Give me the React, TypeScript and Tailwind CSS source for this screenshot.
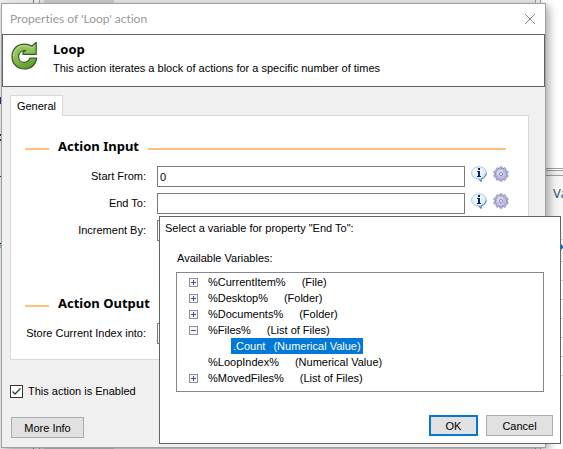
import { useId, useState, type ReactNode } from "react";

function LoopIcon() {
  return (
    <svg viewBox="0 0 28 30" className="h-[30px] w-7 shrink-0" aria-hidden="true">
      <defs>
        <linearGradient id="leaf" x1="0" y1="0" x2="0.3" y2="1">
          <stop offset="0" stopColor="#9cc065" />
          <stop offset="0.5" stopColor="#8fc456" />
          <stop offset="1" stopColor="#64a035" />
        </linearGradient>
      </defs>
      <path
        d="M21.800 5.200 L26.200 1.300 V13.400 H13 V10.900 L15.500 9.600 C11.500 8.900 8.600 11.700 8.600 15.400 C8.600 19 11 21.300 14 21.300 C17 21.300 19 20 19.800 17.200 H26.600 C26 23.600 20.900 28 14.300 28 C7 28 2 22.700 2 15.500 C2 8 7.500 3.200 14 3.200 C17.200 3.200 19.500 3.800 21.800 5.200 Z"
        fill="url(#leaf)"
        stroke="#365a22"
        strokeWidth="1.200"
        strokeLinejoin="round"
      />
      <path d="M3.600 15 C3.600 9 8 4.800 14 4.800 C17 4.800 19.500 5.500 22 7 L25 4.200" fill="none" stroke="#c3dda0" strokeWidth="1" />
    </svg>
  );
}

function InfoIcon() {
  return (
    <svg viewBox="0 0 16 16" className="size-4" aria-hidden="true">
      <defs>
        <radialGradient id="bubble" cx="0.400" cy="0.300" r="0.800">
          <stop offset="0" stopColor="#ffffff" />
          <stop offset="0.600" stopColor="#d9edfb" />
          <stop offset="1" stopColor="#7fa9d6" />
        </radialGradient>
      </defs>
      <path
        d="M8 0.800 C12.200 0.800 15.400 3.400 15.400 6.900 C15.400 9.800 13.200 12.100 10.300 12.800 L10.200 15.600 L7.400 13 C3.500 12.800 0.600 10.300 0.600 6.900 C0.600 3.400 3.800 0.800 8 0.800 Z"
        fill="url(#bubble)"
        stroke="#a9c4e2"
        strokeWidth="0.900"
      />
      <path d="M15.200 7.500 C15 10 13 12.200 10.300 12.800 L10.200 15.300 L7.600 13" fill="none" stroke="#4f76ad" strokeWidth="1" />
      <path d="M7 2 H9 V4 H7 Z M6 5 H9 V10 H10 V11 H6 V10 H7 V6 H6 Z" fill="#101f7c" />
    </svg>
  );
}

const TEETH = [0, 36, 72, 108, 144, 180, 216, 252, 288, 324];

function GearIcon() {
  return (
    <svg viewBox="0 0 16 16" className="size-4" aria-hidden="true">
      <g fill="#b9b8df" stroke="#8584ae" strokeWidth="0.700">
        {TEETH.map((angle) => (
          <rect key={angle} x="6.700" y="0.700" width="2.600" height="3.500" rx="0.700" transform={`rotate(${angle} 8 8)`} />
        ))}
        <circle cx="8" cy="8" r="5.200" />
      </g>
      <circle cx="8" cy="8" r="5" fill="#c2c1e5" />
      <circle cx="7" cy="6.500" r="3" fill="#d3d2ef" />
      <circle cx="8" cy="8" r="1.500" fill="#ffffff" stroke="#7d7ca8" strokeWidth="0.900" />
    </svg>
  );
}

function SectionTitle({ children }: { children: ReactNode }) {
  return (
    <div className="mr-[3px] flex h-5 items-start">
      <span className="mt-3 h-0.5 w-6 bg-[#ffbf80]" />
      <h2 className="mx-[9px] font-['Noto_Sans','DejaVu_Sans',sans-serif] text-[13px] leading-5 font-bold">{children}</h2>
      <span className="mt-3 h-0.5 flex-1 bg-[#ffbf80]" />
    </div>
  );
}

function Field({ label, initial = "", helpers = false }: { label: string; initial?: string; helpers?: boolean }) {
  const id = useId();
  const [value, setValue] = useState(initial);
  return (
    <div className="flex h-[21px] items-center">
      <label htmlFor={id} className="w-[121px] shrink-0 text-right whitespace-nowrap">
        {label}
      </label>
      <input
        id={id}
        value={value}
        onChange={(e) => setValue(e.target.value)}
        className="ml-[11px] h-[21px] min-w-0 flex-1 border border-[#7a7a7a] bg-white px-0.5 outline-none"
      />
      <div className="flex h-full w-11 items-start justify-end gap-1.5">
        {helpers && (
          <>
            <button type="button" aria-label={`About ${label}`}>
              <InfoIcon />
            </button>
            <button type="button" aria-label={`Choose variable for ${label}`}>
              <GearIcon />
            </button>
          </>
        )}
      </div>
    </div>
  );
}

function Expander({ open }: { open: boolean }) {
  return (
    <svg viewBox="0 0 9 9" className="size-[9px]" aria-hidden="true">
      <rect x="0.500" y="0.500" width="8" height="8" fill="#f4f4f4" stroke="#919191" />
      <path d={open ? "M2 4.500 H7" : "M2 4.500 H7 M4.500 2 V7"} stroke="#3553a5" />
    </svg>
  );
}

const VARIABLES = [
  { name: "%CurrentItem%", type: "(File)", state: "closed" },
  { name: "%Desktop%", type: "(Folder)", state: "closed" },
  { name: "%Documents%", type: "(Folder)", state: "closed" },
  { name: "%Files%", type: "(List of Files)", state: "open", child: { name: ".Count", type: "(Numerical Value)" } },
  { name: "%LoopIndex%", type: "(Numerical Value)", state: "leaf" },
  { name: "%MovedFiles%", type: "(List of Files)", state: "closed" },
];

function VariablePicker() {
  return (
    <section
      role="dialog"
      aria-label="Select a variable"
      className="absolute top-[216px] right-0.5 left-[159px] border border-[#646464] bg-white pb-[7px]"
    >
      <p className="mt-[3px] ml-[5px] leading-4">Select a variable for property "End To":</p>
      <p className="mt-[14px] ml-[17px] leading-4">Available Variables:</p>
      <ul role="tree" className="mt-1.5 mr-4 ml-4 h-[120px] border border-[#828790] pt-px pl-3">
        {VARIABLES.map((v) => (
          <li key={v.name} role="treeitem">
            <div className="flex h-4 items-center leading-4">
              <button type="button" aria-label={`Toggle ${v.name}`} className="w-[19px]">
                {v.state !== "leaf" && <Expander open={v.state === "open"} />}
              </button>
              <span>{v.name}</span>
              <span className="ml-4">{v.type}</span>
            </div>
            {v.child && (
              <div className="ml-[42px] flex h-4 w-fit gap-2 bg-[#0078d7] px-0.5 leading-4 text-white">
                <span>{v.child.name}</span>
                <span>{v.child.type}</span>
              </div>
            )}
          </li>
        ))}
      </ul>
      <div className="mt-[23px] mr-[7px] flex justify-end gap-2">
        <button type="button" className="h-[21px] w-[49px] border-2 border-[#0078d7] bg-[#e1e1e1] leading-4">
          OK
        </button>
        <button type="button" className="h-[21px] w-[67px] border border-[#adadad] bg-[#e1e1e1] leading-4">
          Cancel
        </button>
      </div>
    </section>
  );
}

function BackgroundWindow() {
  return (
    <div className="absolute inset-0 flex bg-[#e8e8e8]">
      <div className="w-[34px] border-r border-[#777777] bg-[#f0f0f0]">
        <svg viewBox="0 0 2 449" className="h-[449px] w-0.5" aria-hidden="true">
          <path d="M0 97 h1 v7 h-1 Z" fill="#23359c" />
          <path d="M0 134 h1 v2 h-1 Z M0 139 h1 v2 h-1 Z" fill="#5a1f3c" />
          <path d="M0 176 h2 v1 h-2 Z M0 243 h2 v1 h-2 Z" fill="#333333" />
          <path d="M0 244 h1 v4 h-1 Z" fill="#7cc4dc" />
        </svg>
      </div>
      <div className="w-1.5 border-r border-[#a0a0a0] bg-[#f4f4f4]" />
      <div className="ml-1 w-[70px] bg-[#cbcbcb]" />
      <div className="flex-1" />
      <div className="w-7 border-l border-[#a0a0a0] bg-[#f0f0f0] pl-1">
        <div className="h-full border-l border-[#a0a0a0] bg-white">
          <div className="h-[168px]" />
          <div className="h-[3px] border-y border-[#a0a0a0]" />
          <div className="h-[5px] border-b border-[#a0a0a0] bg-[#f0f0f0]" />
          <div className="h-16 border-b border-[#cccccc] bg-[#f5f5f5] pt-[7px] pl-3 font-['Noto_Sans','DejaVu_Sans',sans-serif] text-[13px] leading-5 text-[#33557f]">
            Va
          </div>
          <div className="flex h-[22px] items-start justify-end border-b border-[#cccccc] bg-[#f5f5f5] pt-0.5">
            <svg viewBox="0 0 4 10" className="h-2.5 w-1" aria-hidden="true">
              <path d="M0 0 L4 4 V6 L0 10 Z" fill="#0070b8" />
            </svg>
          </div>
          <div className="h-[19px] border-b border-[#cccccc]" />
          <div className="h-[19px] border-b border-[#cccccc]" />
          <div className="h-[19px] border-b border-[#cccccc]" />
          <div className="h-[19px] border-b border-[#cccccc]" />
          <div className="h-[19px] border-b border-[#cccccc]" />
          <div className="h-[19px] border-b border-[#cccccc]" />
        </div>
      </div>
    </div>
  );
}

export default function App() {
  const [enabled, setEnabled] = useState(true);
  return (
    <main className="relative h-screen overflow-hidden font-['Liberation_Sans',Arial,sans-serif] text-[11px] text-black">
      <BackgroundWindow />
      <section
        role="dialog"
        aria-label="Properties of 'Loop' action"
        className="relative mt-[3px] mr-[17px] ml-px border border-[#a0a0a0] bg-[#f0f0f0] pb-[9px] shadow-[3px_3px_9px_rgba(0,0,0,0.35)]"
      >
        <header className="flex h-[30px] items-center justify-between bg-white pr-[10px] pl-2">
          <h1 className="font-['Lato','Open_Sans',sans-serif] text-xs text-[#999999] [font-variant-ligatures:none]">
            Properties of 'Loop' action
          </h1>
          <button type="button" aria-label="Close">
            <svg viewBox="0 0 10 10" className="size-[10px]" aria-hidden="true">
              <path d="M0 0 L10 10 M10 0 L0 10" stroke="#8a8a8a" />
            </svg>
          </button>
        </header>
        <div className="flex h-[53px] border border-[#646464] bg-white pt-1.5 pl-[7px]">
          <LoopIcon />
          <div className="ml-[15px]">
            <h2 className="font-['Noto_Sans','DejaVu_Sans',sans-serif] text-[13px] leading-4 font-bold">Loop</h2>
            <p className="mt-[3px] leading-4">This action iterates a block of actions for a specific number of times</p>
          </div>
        </div>
        <div className="mt-2 mr-4 ml-2">
          <div role="tablist" className="flex">
            <button
              type="button"
              role="tab"
              aria-selected="true"
              className="relative -mb-px h-[21px] w-[53px] border border-b-0 border-[#d9d9d9] bg-white leading-4"
            >
              General
            </button>
          </div>
          <div role="tabpanel" className="h-[245px] border border-[#d9d9d9] bg-white pt-5 pr-[19px] pl-3.5">
            <SectionTitle>Action Input</SectionTitle>
            <div className="mt-2.5 flex flex-col gap-1.5">
              <Field label="Start From:" initial="0" helpers />
              <Field label="End To:" helpers />
              <Field label="Increment By:" helpers />
            </div>
            <div className="mt-[52px]">
              <SectionTitle>Action Output</SectionTitle>
            </div>
            <div className="mt-2.5">
              <Field label="Store Current Index into:" />
            </div>
          </div>
          <label className="mt-[23px] flex h-4 items-center gap-[5px]">
            <input
              type="checkbox"
              checked={enabled}
              onChange={(e) => setEnabled(e.target.checked)}
              className="peer sr-only"
            />
            <svg viewBox="0 0 13 13" className="size-[13px]" aria-hidden="true">
              <rect x="0.500" y="0.500" width="12" height="12" fill="#ffffff" stroke="#333333" />
              {enabled && <path d="M2.500 6.500 L5 9 L10.500 3.500" fill="none" stroke="#333333" strokeWidth="1.300" />}
            </svg>
            This action is Enabled
          </label>
          <button type="button" className="mt-[18px] ml-px block h-[21px] w-[73px] border border-[#adadad] bg-[#e1e1e1] leading-4">
            More Info
          </button>
        </div>
      </section>
      <VariablePicker />
    </main>
  );
}
